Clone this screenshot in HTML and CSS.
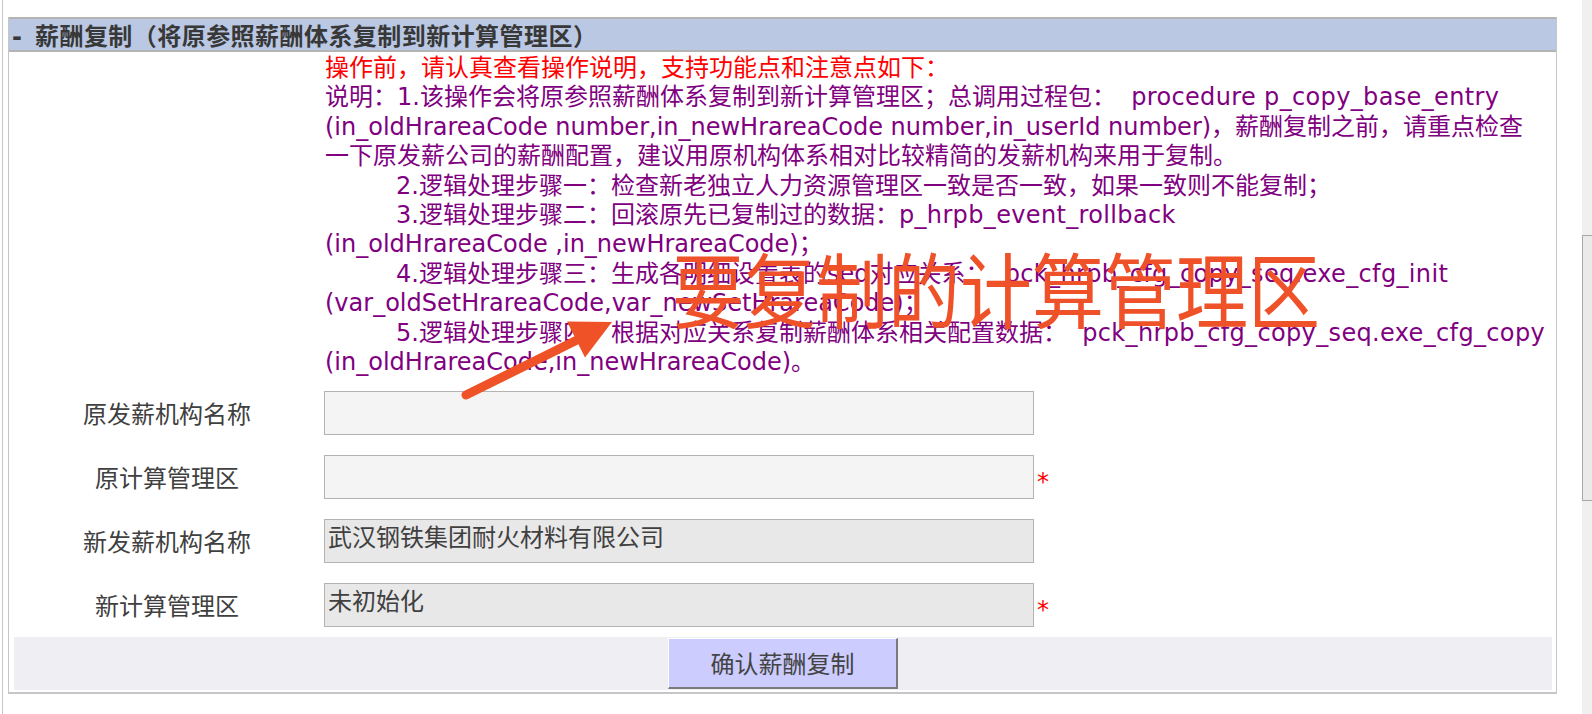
FILE: index.html
```html
<!DOCTYPE html>
<html lang="zh-CN">
<head>
<meta charset="utf-8">
<title>薪酬复制</title>
<link rel="stylesheet" href="styles.css">
</head>
<body>
<div class="page">
  <div class="frame">
    <div class="panel">
      <div class="hd"><span class="dash">-</span>薪酬复制（将原参照薪酬体系复制到新计算管理区）</div>
      <div class="bd">
        <div class="row desc-row">
          <div class="lbl"></div>
          <div class="desc">
            <div class="ln red">操作前，请认真查看操作说明，支持功能点和注意点如下：</div>
            <div class="ln">说明：1.该操作会将原参照薪酬体系复制到新计算管理区；总调用过程包：  <span class="id">procedure p_copy_base_entry</span></div>
            <div class="ln">(in_oldHrareaCode number,in_newHrareaCode number,in_userId number)，薪酬复制之前，请重点检查</div>
            <div class="ln">一下原发薪公司的薪酬配置，建议用原机构体系相对比较精简的发薪机构来用于复制。</div>
            <div class="ln"><span class="ind"></span>2.逻辑处理步骤一：检查新老独立人力资源管理区一致是否一致，如果一致则不能复制；</div>
            <div class="ln"><span class="ind"></span>3.逻辑处理步骤二：回滚原先已复制过的数据：<span class="id">p_hrpb_event_rollback</span></div>
            <div class="ln">(in_oldHrareaCode ,in_newHrareaCode)；</div>
            <div class="ln"><span class="ind"></span>4.逻辑处理步骤三：生成各明细设置表的seq对应关系：  <span class="id">pck_hrpb_cfg_copy_seq.exe_cfg_init</span></div>
            <div class="ln">(var_oldSetHrareaCode,var_newSetHrareaCode)；</div>
            <div class="ln"><span class="ind"></span>5.逻辑处理步骤四：根据对应关系复制薪酬体系相关配置数据：  <span class="id">pck_hrpb_cfg_copy_seq.exe_cfg_copy</span></div>
            <div class="ln">(in_oldHrareaCode,in_newHrareaCode)。</div>
          </div>
        </div>
        <div class="row">
          <div class="lbl">原发薪机构名称</div>
          <div class="fld"><div class="box"></div></div>
        </div>
        <div class="row">
          <div class="lbl">原计算管理区</div>
          <div class="fld"><div class="box"></div><span class="req">*</span></div>
        </div>
        <div class="row">
          <div class="lbl">新发薪机构名称</div>
          <div class="fld"><div class="box dis">武汉钢铁集团耐火材料有限公司</div></div>
        </div>
        <div class="row">
          <div class="lbl">新计算管理区</div>
          <div class="fld"><div class="box dis">未初始化</div><span class="req">*</span></div>
        </div>
        <div class="bar"><button class="btn" type="button">确认薪酬复制</button></div>
      </div>
    </div>
  </div>
  <div class="note">要复制的计算管理区</div>
  <svg class="arrow" width="170" height="95" viewBox="0 0 170 95">
    <line x1="11" y1="85" x2="122" y2="30" stroke="#ee5226" stroke-width="9" stroke-linecap="round"/>
    <polygon points="157,12 112,11.5 130,47.5" fill="#ee5226"/>
  </svg>
</div>
<div class="sb"><div class="thumb"></div></div>
</body>
</html>
```

FILE: styles.css
```css
html, body {
  margin: 0;
  padding: 0;
  background: #ffffff;
}
body {
  display: flex;
  width: 1592px;
  height: 714px;
  overflow: hidden;
  font-family: "DejaVu Sans", "Noto Sans CJK SC", sans-serif;
}
.page {
  position: relative;
  width: 1582px;
  height: 714px;
  padding-left: 2px;
  box-sizing: border-box;
}
.frame {
  height: 714px;
  border-left: 1px solid #c8c8c8;
  padding-top: 17px;
  padding-left: 5px;
  box-sizing: border-box;
}
.panel {
  width: 1549px;
  box-sizing: border-box;
  border-left: 1px solid #c6c6c6;
  border-right: 1px solid #c6c6c6;
  border-bottom: 2px solid #c6c6c6;
}
.hd {
  height: 35px;
  box-sizing: border-box;
  border-top: 2px solid #b4b4b4;
  border-bottom: 2px solid #b4b4b4;
  background: #bac8e4;
  color: #383838;
  font-family: "Noto Sans CJK SC", sans-serif;
  font-weight: bold;
  font-size: 24px;
  letter-spacing: 0.45px;
  line-height: 31px;
  padding-left: 3px;
  white-space: nowrap;
}
.dash {
  display: inline-block;
  width: 23px;
  font-family: "DejaVu Sans", sans-serif;
}
.bd {
  padding: 0 4px 2px 5px;
}
.row {
  display: grid;
  grid-template-columns: 306px 1fr;
  height: 64px;
  align-items: center;
}
.desc-row {
  height: auto;
  align-items: start;
}
.lbl {
  text-align: center;
  font-family: "Noto Sans CJK SC", sans-serif;
  font-size: 24px;
  color: #404040;
}
.desc {
  padding: 2px 0 3.6px 5px;
  color: #800080;
  font-size: 24px;
}
.ln {
  height: 29.4px;
  line-height: 29.4px;
  white-space: pre;
}
.ln.red {
  color: #ff0000;
}
.id {
  letter-spacing: 0.35px;
}
.ind {
  display: inline-block;
  width: 71px;
}
.fld {
  display: flex;
  align-items: center;
  padding-left: 4px;
}
.box {
  width: 710px;
  height: 44px;
  box-sizing: border-box;
  border: 1px solid #b3b3b3;
  background: #f4f4f4;
  padding: 1px 3px;
  font-family: "Noto Sans CJK SC", sans-serif;
  font-size: 24px;
  line-height: 30px;
  color: #404040;
}
.box.dis {
  background: #e8e8e8;
}
.req {
  color: #ff0000;
  font-size: 24px;
  line-height: 24px;
  margin-left: 3px;
  padding-top: 10px;
}
.bar {
  height: 53px;
  box-sizing: border-box;
  padding: 1px 0;
  background: #eeeef3;
  display: flex;
  justify-content: center;
}
.btn {
  width: 230px;
  height: 51px;
  box-sizing: border-box;
  margin: 0;
  padding: 0;
  background: #ccccff;
  border-style: solid;
  border-width: 1px 2px 2px 1px;
  border-color: #ffffff #7a7a7a #7a7a7a #ffffff;
  font-family: "Noto Sans CJK SC", sans-serif;
  font-size: 24px;
  color: #444444;
}
.note {
  position: absolute;
  left: 672px;
  top: 246px;
  font-family: "Noto Sans CJK SC", sans-serif;
  font-size: 72px;
  line-height: 72px;
  color: #ef5228;
  white-space: nowrap;
  transform: scaleY(1.14);
  transform-origin: top left;
}
.arrow {
  position: absolute;
  left: 455px;
  top: 310px;
}
.sb {
  width: 10px;
  height: 714px;
  background: #f0f0f0;
}
.thumb {
  margin-top: 235px;
  height: 266px;
  box-sizing: border-box;
  background: #eaeaea;
  border: 1px solid #a8a8a8;
  border-right: none;
}
```
